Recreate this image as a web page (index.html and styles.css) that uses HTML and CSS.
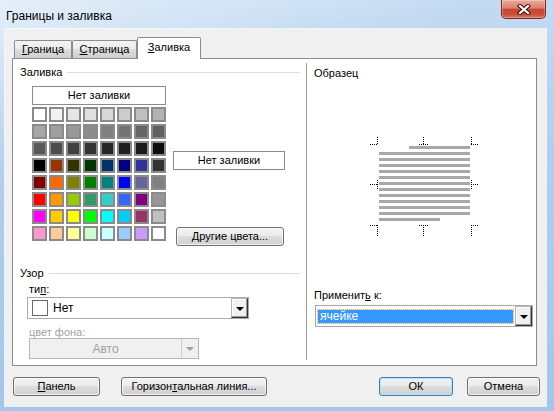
FILE: index.html
```html
<!DOCTYPE html>
<html lang="ru">
<head>
<meta charset="UTF-8">
<title>Границы и заливка</title>
<link rel="stylesheet" href="styles.css">
</head>
<body>
<div class="window">
  <div class="titlebar">
    <span class="title">Границы и заливка</span>
    <div class="close">
      <svg width="14" height="11" viewBox="0 0 14 11">
        <path d="M3 2 L11 9 M11 2 L3 9" stroke="#3a1009" stroke-width="4.2" stroke-linecap="square"/>
        <path d="M3 2 L11 9 M11 2 L3 9" stroke="#fff" stroke-width="2.2" stroke-linecap="square"/>
      </svg>
    </div>
  </div>

  <div class="client">
    <div class="tabs">
      <div class="tab tab-border"><u>Г</u>раница</div>
      <div class="tab tab-page"><u>С</u>траница</div>
      <div class="tab tab-fill selected"><u>З</u>аливка</div>
    </div>

    <div class="panel">
      <!-- left: fill + pattern -->
      <div class="fill-pane">
        <div class="group-head"><span>Заливка</span><i class="rule"></i></div>
        <div class="fill-row">
          <div class="palette-col">
            <div class="no-fill">Нет заливки</div>
            <div class="palette">
              <i class="cell" style="background:#ffffff"></i><i class="cell" style="background:#f2f2f2"></i><i class="cell" style="background:#e6e6e6"></i><i class="cell" style="background:#dfdfdf"></i><i class="cell" style="background:#d9d9d9"></i><i class="cell" style="background:#cccccc"></i><i class="cell" style="background:#bfbfbf"></i><i class="cell" style="background:#b3b3b3"></i>
              <i class="cell" style="background:#a6a6a6"></i><i class="cell" style="background:#a0a0a0"></i><i class="cell" style="background:#999999"></i><i class="cell" style="background:#8c8c8c"></i><i class="cell" style="background:#808080"></i><i class="cell" style="background:#737373"></i><i class="cell" style="background:#666666"></i><i class="cell" style="background:#606060"></i>
              <i class="cell" style="background:#595959"></i><i class="cell" style="background:#4d4d4d"></i><i class="cell" style="background:#404040"></i><i class="cell" style="background:#333333"></i><i class="cell" style="background:#262626"></i><i class="cell" style="background:#202020"></i><i class="cell" style="background:#1a1a1a"></i><i class="cell" style="background:#0d0d0d"></i>
              <i class="cell" style="background:#000000"></i><i class="cell" style="background:#993300"></i><i class="cell" style="background:#333300"></i><i class="cell" style="background:#003300"></i><i class="cell" style="background:#003366"></i><i class="cell" style="background:#000080"></i><i class="cell" style="background:#333399"></i><i class="cell" style="background:#333333"></i>
              <i class="cell" style="background:#800000"></i><i class="cell" style="background:#ff6600"></i><i class="cell" style="background:#808000"></i><i class="cell" style="background:#008000"></i><i class="cell" style="background:#008080"></i><i class="cell" style="background:#0000ff"></i><i class="cell" style="background:#666699"></i><i class="cell" style="background:#808080"></i>
              <i class="cell" style="background:#ff0000"></i><i class="cell" style="background:#ff9900"></i><i class="cell" style="background:#99cc00"></i><i class="cell" style="background:#339966"></i><i class="cell" style="background:#33cccc"></i><i class="cell" style="background:#3366ff"></i><i class="cell" style="background:#800080"></i><i class="cell" style="background:#969696"></i>
              <i class="cell" style="background:#ff00ff"></i><i class="cell" style="background:#ffcc00"></i><i class="cell" style="background:#ffff00"></i><i class="cell" style="background:#00ff00"></i><i class="cell" style="background:#00ffff"></i><i class="cell" style="background:#00ccff"></i><i class="cell" style="background:#993366"></i><i class="cell" style="background:#c0c0c0"></i>
              <i class="cell" style="background:#ff99cc"></i><i class="cell" style="background:#ffcc99"></i><i class="cell" style="background:#ffff99"></i><i class="cell" style="background:#ccffcc"></i><i class="cell" style="background:#ccffff"></i><i class="cell" style="background:#99ccff"></i><i class="cell" style="background:#cc99ff"></i><i class="cell" style="background:#ffffff"></i>
            </div>
          </div>
          <div class="fill-side">
            <div class="current">Нет заливки</div>
            <div class="btn more"><u>Д</u>ругие цвета...</div>
          </div>
        </div>

        <div class="group-head pattern-head"><span>Узор</span><i class="rule"></i></div>
        <div class="field-label">ти<u>п</u>:</div>
        <div class="combo type-combo">
          <i class="swatch"></i>
          <span class="combo-text">Нет</span>
          <span class="drop"><i class="arrow"></i></span>
        </div>
        <div class="field-label disabled">цвет фона:</div>
        <div class="combo off-combo">
          <span class="off-text">Авто</span>
          <span class="off-drop"><i class="arrow grey"></i></span>
        </div>
      </div>

      <!-- right: sample -->
      <div class="preview-pane">
        <div class="pane-title">Образец</div>
        <svg class="sample" width="110" height="102" viewBox="0 0 110 102">
          <g fill="#a8a8a8">
            <rect x="40" y="10" width="61" height="3"/>
            <rect x="10" y="16" width="91" height="3"/>
            <rect x="10" y="22" width="91" height="3"/>
            <rect x="10" y="28" width="91" height="3"/>
            <rect x="10" y="34" width="91" height="3"/>
            <rect x="10" y="40" width="91" height="3"/>
            <rect x="10" y="46" width="91" height="3"/>
            <rect x="10" y="52" width="91" height="3"/>
            <rect x="10" y="58" width="91" height="3"/>
            <rect x="10" y="64" width="91" height="3"/>
            <rect x="10" y="70" width="91" height="3"/>
            <rect x="10" y="76" width="91" height="3"/>
            <rect x="10" y="82" width="61" height="3"/>
          </g>
          <g stroke="#000" stroke-width="1" stroke-dasharray="1 1" fill="none">
            <path d="M1 8.5 H9 M8.5 1 V9"/>
            <path d="M50 8.5 H59 M54.5 1 V9"/>
            <path d="M102 8.5 H110 M102.5 1 V9"/>
            <path d="M1 48.5 H9 M8.5 44 V53"/>
            <path d="M102 48.5 H110 M102.5 44 V53"/>
            <path d="M1 89.5 H9 M8.5 89 V101"/>
            <path d="M50 89.5 H59 M54.5 89 V101"/>
            <path d="M102 89.5 H110 M102.5 89 V101"/>
          </g>
        </svg>
        <div class="apply-label">Применит<u>ь</u> к:</div>
        <div class="combo apply-combo">
          <span class="picked">ячейке</span>
          <span class="drop"><i class="arrow"></i></span>
        </div>
      </div>
    </div>

    <div class="buttons">
      <div class="btn btn-panel"><u>П</u>анель</div>
      <div class="btn btn-line">Горизон<u>т</u>альная линия...</div>
      <div class="btn btn-ok default">ОК</div>
      <div class="btn btn-cancel">Отмена</div>
    </div>
  </div>
</div>
</body>
</html>
```

FILE: styles.css
```css
body {
  margin: 0;
  font-family: "Liberation Sans", Arial, sans-serif;
  font-size: 11px;
  color: #000;
}
u {
  text-underline-offset: 1px;
}
.window {
  width: 554px;
  height: 411px;
  overflow: hidden;
  background:
    linear-gradient(160deg, rgba(255,255,255,.55) 0, rgba(255,255,255,0) 30%),
    linear-gradient(#c3daf2, #b3cfed 35%, #a5c5e9);
}
.titlebar {
  height: 29px;
  display: flex;
  justify-content: space-between;
  align-items: flex-start;
}
.title {
  font-size: 12px;
  line-height: 14px;
  margin: 9px 0 0 6px;
}
.close {
  width: 45px;
  height: 19px;
  margin-right: 8px;
  box-sizing: border-box;
  border: 1px solid #7a2a1f;
  border-top: none;
  border-radius: 0 0 5px 5px;
  background: linear-gradient(#e9aa9c, #dc806b 45%, #c7462e 52%, #c9503a 80%, #d9765f);
  box-shadow: inset 0 0 0 1px rgba(255,255,255,.25);
  display: flex;
  align-items: center;
  justify-content: center;
}
.client {
  margin-left: 5px;
  width: 541px;
  height: 377px;
  box-sizing: border-box;
  padding: 8px 0 0 7px;
  background: #f0f0f0;
  box-shadow: 0 0 0 1px rgba(255,255,255,.75);
}

/* tabs */
.tabs {
  height: 21px;
  display: flex;
  align-items: flex-end;
  padding-left: 2px;
  position: relative;
  z-index: 1;
}
.tab {
  height: 18px;
  box-sizing: border-box;
  border: 1px solid #898c95;
  border-bottom: none;
  border-radius: 2px 2px 0 0;
  background: linear-gradient(#f3f3f3, #ebebeb 50%, #dddddd 50%, #cfcfcf);
  line-height: 17px;
  text-align: center;
}
.tab-border { width: 58px; }
.tab-page { width: 65px; }
.tab-fill { width: 64px; }
.tab.selected {
  height: 22px;
  margin-bottom: -1px;
  background: #fff;
  line-height: 19px;
}

.panel {
  width: 525px;
  height: 308px;
  box-sizing: border-box;
  border: 1px solid #898c95;
  background: #fff;
  display: flex;
}

/* left pane */
.fill-pane {
  width: 293px;
  box-sizing: border-box;
  padding: 7px 0 0 7px;
}
.group-head {
  height: 13px;
  line-height: 13px;
  display: flex;
  align-items: center;
}
.rule {
  flex: 1;
  height: 1px;
  background: #d5dfe5;
  margin: 0 6px 0 5px;
}
.fill-row {
  display: flex;
  margin: 7px 0 0 12px;
}
.no-fill, .current {
  height: 19px;
  box-sizing: border-box;
  border: 1px solid #8a8a8a;
  text-align: center;
  line-height: 17px;
}
.no-fill { width: 134px; }
.palette {
  margin-top: 2px;
  display: grid;
  grid-template-columns: repeat(8, 15px);
  grid-auto-rows: 15px;
  gap: 2px;
}
.cell {
  box-sizing: border-box;
  border: 2px solid #8b8b8b;
}
.fill-side {
  margin-left: 7px;
  display: flex;
  flex-direction: column;
  align-items: flex-start;
}
.current {
  width: 112px;
  margin-top: 65px;
}
.more {
  width: 108px;
  height: 18px;
  margin: 57px 0 0 3px;
  line-height: 16px;
}
.pattern-head { margin-top: 21px; }
.field-label {
  height: 12px;
  line-height: 12px;
  margin: 3px 0 0 9px;
}
.field-label.disabled {
  margin-top: 7px;
  color: #a0a0a0;
}

/* combos */
.combo {
  box-sizing: border-box;
  border: 1px solid #a9a9a9;
  background: #fff;
  display: flex;
  align-items: center;
}
.type-combo {
  width: 222px;
  height: 22px;
  margin: 2px 0 0 7px;
}
.swatch {
  width: 16px;
  height: 16px;
  box-sizing: border-box;
  border: 1px solid #6a6a6a;
  margin-left: 4px;
}
.combo-text {
  flex: 1;
  margin-left: 5px;
  font-size: 12px;
}
.drop {
  width: 17px;
  height: 20px;
  box-sizing: border-box;
  border: 1px solid #4a4a4a;
  border-color: #b5b5b5 #333 #333 #b5b5b5;
  background: #f0f0f0;
  box-shadow: inset -1px -1px 0 #9a9a9a, inset 1px 1px 0 #fff;
  display: flex;
  align-items: center;
  justify-content: center;
}
.arrow {
  width: 0;
  height: 0;
  border-left: 4px solid transparent;
  border-right: 4px solid transparent;
  border-top: 4px solid #000;
  margin-top: 1px;
}
.arrow.grey { border-top-color: #a0a0a0; }
.off-combo {
  width: 170px;
  height: 21px;
  margin-left: 9px;
  border-color: #b7b7b7;
  background: #f0f0f0;
  color: #a0a0a0;
}
.off-text {
  flex: 1;
  text-align: center;
  font-size: 12px;
}
.off-drop {
  width: 16px;
  height: 19px;
  border-left: 1px solid #cfcfcf;
  display: flex;
  align-items: center;
  justify-content: center;
}

/* right pane */
.preview-pane {
  flex: 1;
  margin: 4px 0 5px;
  padding: 4px 0 0 7px;
  border-left: 1px solid #a0a0a0;
}
.pane-title, .apply-label {
  height: 12px;
  line-height: 12px;
}
.sample {
  display: block;
  margin: 57px 0 0 55px;
}
.apply-label { margin-top: 51px; }
.apply-combo {
  width: 218px;
  height: 22px;
  margin: 4px 0 0 1px;
}
.picked {
  flex: 1;
  height: 13px;
  margin: 0 2px 0 2px;
  padding-left: 2px;
  line-height: 13px;
  font-size: 12px;
  color: #fff;
  background: #3399ff;
  outline: 1px dotted #f0a050;
}

/* buttons */
.btn {
  box-sizing: border-box;
  height: 19px;
  border: 1px solid #707070;
  border-radius: 3px;
  background: linear-gradient(#f2f2f2, #ebebeb 45%, #dddddd 50%, #cfcfcf);
  box-shadow: inset 0 0 0 1px rgba(255,255,255,.7);
  text-align: center;
  line-height: 17px;
}
.buttons {
  display: flex;
  margin-top: 11px;
}
.btn-panel { width: 87px; margin-left: 1px; }
.btn-line { width: 146px; margin-left: 21px; }
.btn-ok { width: 74px; margin-left: 112px; }
.btn-cancel { width: 73px; margin-left: 14px; }
.btn.default {
  border-color: #3c7fb1;
  box-shadow: inset 0 0 0 1px #b4e2f8;
}
```
